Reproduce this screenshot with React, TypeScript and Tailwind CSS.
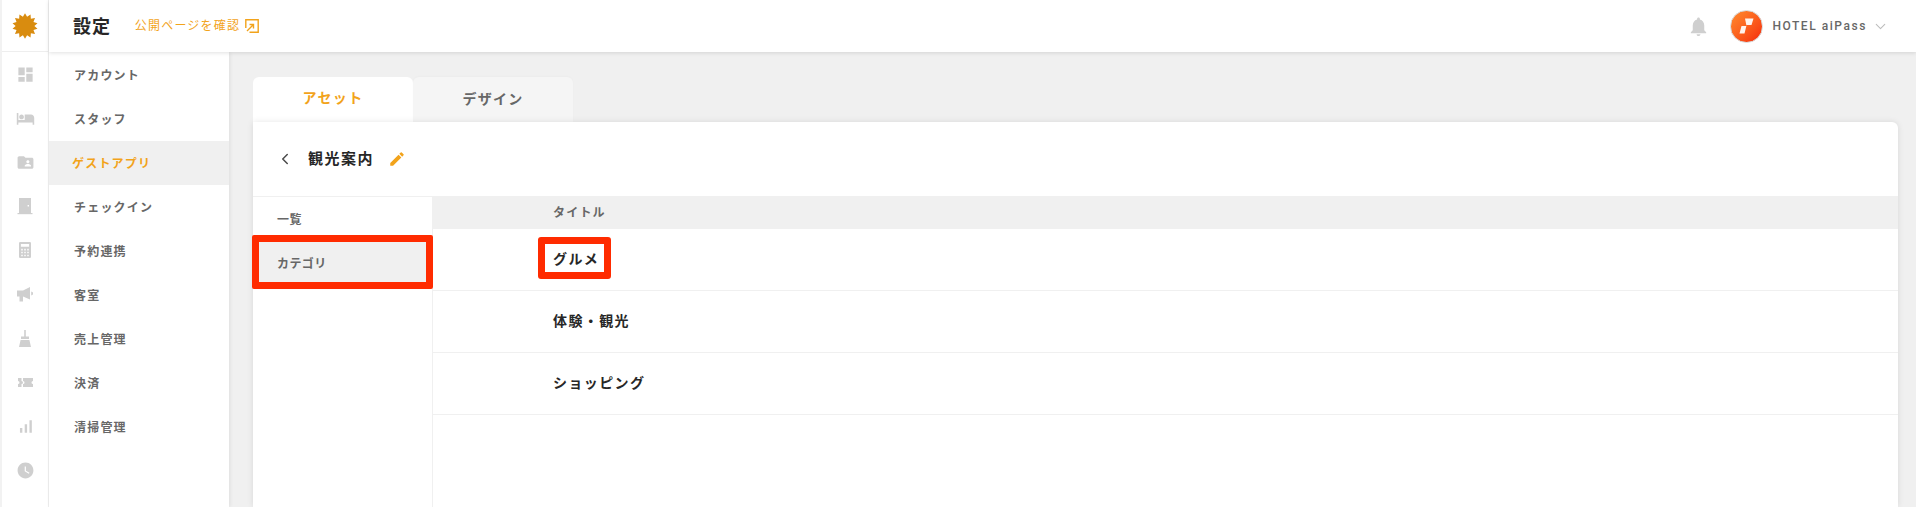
import { ChevronDown, ChevronLeft } from "lucide-react";
import {
  MdDashboard,
  MdEdit,
  MdFolderShared,
  MdHotel,
  MdNotifications,
  MdSignalCellularAlt,
  MdWatchLater,
} from "react-icons/md";

const settingsMenu = ["アカウント", "スタッフ", "ゲストアプリ", "チェックイン", "予約連携", "客室", "売上管理", "決済", "清掃管理"];
const rows = ["グルメ", "体験・観光", "ショッピング"];

function SunLogo() {
  const points: string[] = [];
  for (let i = 0; i < 28; i++) {
    const r = i % 2 === 0 ? 12.8 : 9.4;
    const a = (i * Math.PI) / 14 - Math.PI / 2;
    points.push(`${(13 + r * Math.cos(a)).toFixed(2)},${(13 + r * Math.sin(a)).toFixed(2)}`);
  }
  return (
    <svg width="26" height="26" viewBox="0 0 26 26">
      <polygon points={points.join(" ")} fill="#d98c0f" />
    </svg>
  );
}

function DoorIcon() {
  return (
    <svg width="18" height="18" viewBox="0 0 18 18" fill="#cfcfcf">
      <path d="M3 1h12v15H3zM11.6 8h1.4v1.400h-1.400z" fillRule="evenodd" />
      <path d="M1.500 16h15v1.200h-15z" />
    </svg>
  );
}

function CalculatorIcon() {
  return (
    <svg width="12" height="16" viewBox="0 0 16 19" preserveAspectRatio="none" fill="#cfcfcf">
      <path
        fillRule="evenodd"
        d="M1.500 0h13A1.500 1.500 0 0 1 16 1.500v16a1.500 1.500 0 0 1-1.500 1.500h-13A1.500 1.500 0 0 1 0 17.500v-16A1.500 1.500 0 0 1 1.500 0zM2.500 2.500v3h11v-3zM3 8v2h2V8zM7 8v2h2V8zM11 8v2h2V8zM3 11.500v2h2v-2zM7 11.500v2h2v-2zM11 11.500v2h2v-2zM3 15v2h2v-2zM7 15v2h2v-2zM11 15v2h2v-2z"
      />
    </svg>
  );
}

function MegaphoneIcon() {
  return (
    <svg width="16" height="15" viewBox="0 0 16 15" fill="#cfcfcf">
      <path d="M0 3.500h6L13 0v12.500L6 9.500v5H2.500v-5H0zM14.200 4.500 16 5.500v2l-1.800 1z" />
    </svg>
  );
}

function BroomIcon() {
  return (
    <svg width="14" height="17" viewBox="0 0 14 17" fill="#cfcfcf">
      <path d="M6.200 0h1.600v6.500h3.200v2.500H3V6.500h3.200zM2.600 10h8.800L13 17H1z" />
    </svg>
  );
}

function TicketIcon() {
  return (
    <svg width="15" height="9" viewBox="0 0 15 9" fill="#cfcfcf">
      <path d="M0 0h3.500v3a1.500 1.500 0 0 1 0 3v3H0V6a1.500 1.500 0 0 0 0-3zM5 0h10v3a1.500 1.500 0 0 0 0 3v3H5V6a1.500 1.500 0 0 0 0-3z" />
    </svg>
  );
}

function ExternalIcon() {
  return (
    <svg width="14" height="14" viewBox="0 0 14 14" fill="none" stroke="#f2a31b" strokeWidth="1.400">
      <path d="M.8 9V.8h12.400v12.400H4.500" />
      <path d="M2 12 8 6M4.500 5.500H8.500v4" />
    </svg>
  );
}

function AiPassBadge() {
  return (
    <div className="flex h-[33px] w-[33px] items-center justify-center rounded-full border border-[#d8d8d8] bg-gradient-to-br from-[#ff8a2e] to-[#f5200a]">
      <svg width="17" height="16" viewBox="0 0 17 16" fill="#fff">
        <path d="M7 0.500h8.500L13.500 7H8.600L6.500 15.500H1.500L3.500 8H8.500z" opacity="0.92" />
      </svg>
    </div>
  );
}

function IconRail() {
  const c = "text-[#cfcfcf]";
  return (
    <div className="flex w-[49px] shrink-0 flex-col items-center border-l-2 border-r border-l-[#f2f2f2] border-r-[#eeeeee] bg-white">
      <div className="flex h-[52px] w-full items-center justify-center border-b border-[#eeeeee]">
        <SunLogo />
      </div>
      {[
        <MdDashboard size={19} className={c} />,
        <MdHotel size={19} className={c} />,
        <MdFolderShared size={19} className={c} />,
        <DoorIcon />,
        <CalculatorIcon />,
        <MegaphoneIcon />,
        <BroomIcon />,
        <TicketIcon />,
        <MdSignalCellularAlt size={19} className={c} />,
        <MdWatchLater size={19} className={c} />,
      ].map((icon, i) => (
        <div key={i} className="flex h-[44px] w-full items-center justify-center">
          {icon}
        </div>
      ))}
    </div>
  );
}

export default function App() {
  return (
    <div className="relative flex h-[507px] w-[1916px] overflow-hidden bg-[#f0f0f0] font-['Roboto','Noto_Sans_CJK_JP',sans-serif]">
      <IconRail />
      <div className="flex min-w-0 flex-1 flex-col">
        <header className="z-10 flex h-[52px] shrink-0 items-center bg-white pl-[24px] pr-[27px] shadow-[0_1px_4px_rgba(0,0,0,0.12)]">
          <h1 className="text-[18px] font-bold tracking-[0.9px] text-[#272727]">設定</h1>
          <a className="ml-[24px] flex items-center gap-[5px] text-[12px] tracking-[1.2px] text-[#f2a31b]">
            公開ページを確認
            <ExternalIcon />
          </a>
          <div className="ml-auto flex items-center">
            <MdNotifications size={23} className="text-[#cfcfcf]" />
            <div className="ml-[20px]">
              <AiPassBadge />
            </div>
            <span className="ml-[9px] text-[12px] font-medium tracking-[1.55px] text-[#676767]">HOTEL aiPass</span>
            <ChevronDown size={17} strokeWidth={1.5} className="ml-[5px] text-[#bdbdbd]" />
          </div>
        </header>
        <div className="flex min-h-0 flex-1">
          <nav className="w-[180px] shrink-0 bg-white pt-[1px] shadow-[1px_0_4px_rgba(0,0,0,0.08)]">
            {settingsMenu.map((label) => {
              const active = label === "ゲストアプリ";
              return (
                <div
                  key={label}
                  className={`flex h-[44px] items-center pt-[1px] text-[12px] font-bold tracking-[1.2px] ${
                    active ? "bg-[#f0f0f0] pl-[23px] text-[#f2a31b]" : "pl-[25px] text-[#676767]"
                  }`}
                >
                  {label}
                </div>
              );
            })}
          </nav>
          <main className="flex min-w-0 flex-1 flex-col pl-[24px] pr-[18px] pt-[25px]">
            <div className="flex h-[45px] shrink-0">
              <div className="flex w-[160px] items-center justify-center rounded-t-[6px] bg-white pb-[3px] text-[14px] font-bold tracking-[1.3px] text-[#f2a31b]">
                アセット
              </div>
              <div className="flex w-[160px] items-center justify-center rounded-t-[6px] bg-[#f5f5f5] pb-[1px] text-[14px] font-bold tracking-[1.3px] text-[#676767] shadow-[0_-1px_2px_rgba(0,0,0,0.02)]">
                デザイン
              </div>
            </div>
            <div className="flex min-h-0 flex-1 flex-col rounded-tr-[6px] bg-white shadow-[0_0_6px_rgba(0,0,0,0.1)]">
              <div className="flex h-[75px] shrink-0 items-center border-b border-[#f0f0f0] pl-[23px]">
                <ChevronLeft size={18} strokeWidth={2} className="text-[#4a4a4a]" />
                <h2 className="ml-[14px] text-[15px] font-bold tracking-[1.5px] text-[#272727]">観光案内</h2>
                <MdEdit size={18} className="ml-[14px] text-[#f2a31b]" />
              </div>
              <div className="flex min-h-0 flex-1">
                <aside className="w-[180px] shrink-0 border-r border-[#f0f0f0]">
                  <div className="flex h-[44px] items-center pl-[24px] pt-[1px] text-[12px] font-bold tracking-[0.4px] text-[#676767]">一覧</div>
                  <div className="flex h-[44px] items-center bg-[#f0f0f0] pl-[24px] pt-[1px] text-[12px] font-bold tracking-[0.4px] text-[#676767]">カテゴリ</div>
                </aside>
                <section className="min-w-0 flex-1">
                  <div className="flex h-[32px] items-center bg-[#f0f0f0] pl-[120px] text-[12px] font-bold tracking-[1.2px] text-[#676767]">タイトル</div>
                  {rows.map((row) => (
                    <div key={row} className="flex h-[62px] items-center border-b border-[#f0f0f0] pl-[120px] text-[14px] font-bold tracking-[1.4px] text-[#272727]">
                      {row}
                    </div>
                  ))}
                </section>
              </div>
            </div>
          </main>
        </div>
      </div>
      {/* annotation frames drawn over the screenshot */}
      <div className="absolute left-[252px] top-[235px] h-[54px] w-[181px] rounded-[2px] border-[7px] border-[#ff2b00]" />
      <div className="absolute left-[538px] top-[237px] h-[42px] w-[73px] rounded-[3px] border-[7px] border-[#ff2b00]" />
    </div>
  );
}
